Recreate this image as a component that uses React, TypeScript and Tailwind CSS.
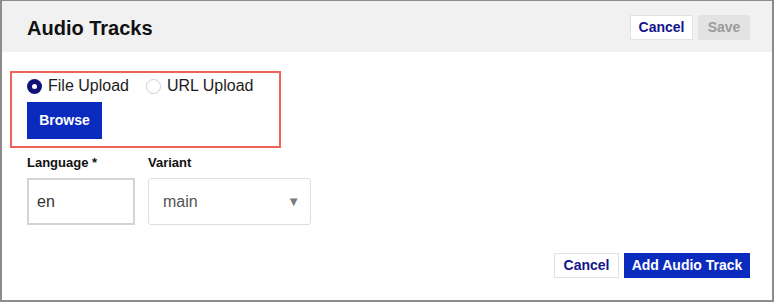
import { useState } from 'react'

const font = { fontFamily: '"Liberation Sans", Arial, sans-serif' }

function Radio({ checked, label, onClick }: { checked: boolean; label: string; onClick: () => void }) {
  return (
    <button onClick={onClick} className="flex h-[20px] items-center gap-[6px] text-[16px] text-[#1d1d1d]">
      {checked ? (
        <span className="flex h-[15px] w-[15px] items-center justify-center rounded-full bg-[#11117a]">
          <span className="h-[5px] w-[5px] rounded-full bg-white" />
        </span>
      ) : (
        <span className="h-[15px] w-[15px] rounded-full border border-[#cfcfcf] bg-white" />
      )}
      <span>{label}</span>
    </button>
  )
}

export default function App() {
  const [mode, setMode] = useState<'file' | 'url'>('file')

  return (
    <div
      className="flex h-[302px] w-[774px] flex-col border-t border-l-2 border-r-2 border-b-2 border-[#8c8c8c] bg-white"
      style={font}
    >
      {/* Header */}
      <div className="flex h-[51px] items-center justify-between bg-[#f1f1f1] pl-[25px] pr-[22px] pt-[2px]">
        <h2 className="text-[20px] font-bold text-[#111]">Audio Tracks</h2>
        <div className="flex gap-[5px]">
          <button className="h-[25px] w-[63px] border border-[#e2e2e2] bg-white text-[14px] font-bold text-[#14148a]">
            Cancel
          </button>
          <button className="h-[25px] w-[52px] bg-[#e3e3e3] text-[14px] font-bold text-[#9b9b9b]">Save</button>
        </div>
      </div>

      {/* Body */}
      <div className="flex flex-1 flex-col pl-[8px] pr-[22px] pt-[19px]">
        <div className="flex h-[77px] w-[271px] flex-col gap-[6px] border-2 border-[#f1625a] pl-[15px] pt-[3px]">
          <div className="flex items-center gap-[17px]">
            <Radio checked={mode === 'file'} label="File Upload" onClick={() => setMode('file')} />
            <Radio checked={mode === 'url'} label="URL Upload" onClick={() => setMode('url')} />
          </div>
          <button className="h-[37px] w-[75px] bg-[#0b2bbf] text-[14px] font-bold text-white">Browse</button>
        </div>

        <div className="mt-[6px] flex gap-[13px] pl-[17px]">
          <div className="flex flex-col gap-[7px]">
            <label className="text-[13px] font-bold leading-[17px] text-[#111]">Language *</label>
            <input
              defaultValue="en"
              className="h-[47px] w-[108px] border-2 border-[#d4d4d4] px-[8px] text-[16px] text-[#333] outline-none"
            />
          </div>
          <div className="flex flex-col gap-[7px]">
            <label className="text-[13px] font-bold leading-[17px] text-[#111]">Variant</label>
            <div className="flex h-[47px] w-[163px] items-center justify-between rounded-[3px] border border-[#dedede] pl-[14px] pr-[10px]">
              <span className="text-[16px] text-[#555]">main</span>
              <span className="text-[13px] text-[#7a7a7a]">▼</span>
            </div>
          </div>
        </div>

        <div className="mt-[28px] flex justify-end gap-[5px]">
          <button className="h-[25px] w-[65px] border border-[#e2e2e2] bg-white text-[14px] font-bold text-[#14148a]">
            Cancel
          </button>
          <button className="h-[25px] w-[126px] bg-[#0b2bbf] text-[14px] font-bold text-white">Add Audio Track</button>
        </div>
      </div>
    </div>
  )
}
